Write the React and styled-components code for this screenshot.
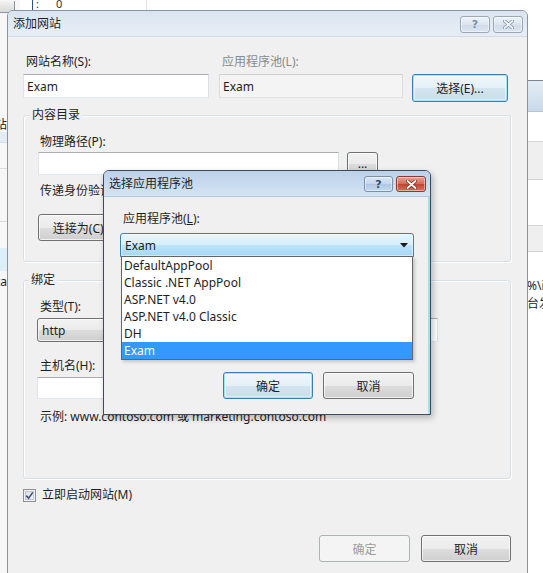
import React from 'react';
import styled, { createGlobalStyle, css } from 'styled-components';

const GlobalStyle = createGlobalStyle`
  html, body {
    margin: 0;
    padding: 0;
  }
  body {
    background: #fff;
    font-family: "Noto Sans", "Noto Sans CJK SC", sans-serif;
    font-size: 12px;
    color: #1e1e1e;
  }
`;

const uiFont = `"Noto Sans", "Noto Sans CJK SC", sans-serif`;

const Desktop = styled.div`
  position: relative;
  width: 543px;
  height: 573px;
  overflow: hidden;
  background: #fff;
  font-family: ${uiFont};
  font-size: 12px;
`;

/* ---------- window behind the dialogs ---------- */

const BackWindow = styled.div`
  position: absolute;
  inset: 0;
  display: grid;
  grid-template-columns: 20px 1fr 16px;
  background: #fff;
`;

const SidePane = styled.div`
  display: flex;
  flex-direction: column;
  overflow: hidden;
  background: ${p => p.$bg || '#fff'};
`;

const PaneRow = styled.div`
  flex: none;
  height: ${p => p.$h}px;
  display: flex;
  align-items: center;
  justify-content: ${p => (p.$end ? 'flex-end' : 'flex-start')};
  padding-right: ${p => p.$pr || 0}px;
  white-space: nowrap;
  background: ${p => p.$bg || 'transparent'};
  border-bottom: ${p => (p.$line ? `1px solid ${p.$line}` : 'none')};
  color: #1e1e1e;
  font-size: 12px;
`;

const CornerButton = styled.div`
  width: 15px;
  height: 12px;
  box-sizing: border-box;
  border-right: 1px solid #8f959c;
  border-bottom: 1px solid #8f959c;
  border-radius: 0 0 3px 0;
  background: linear-gradient(#f2f2f2, #d9d9d9);
`;

const ListHeader = styled.div`
  height: 10px;
  display: flex;
  align-items: flex-start;
  padding-left: 12px;
`;

const HeaderCell = styled.div`
  width: ${p => p.$w}px;
  height: 12px;
  border-left: 1px solid ${p => p.$line};
  font-size: 11px;
  line-height: 8px;
  padding-left: 3px;
  color: #333;
  overflow: hidden;
`;

/* ---------- dialog frame ---------- */

const Window = styled.div`
  position: absolute;
  left: ${p => p.$x}px;
  top: ${p => p.$y}px;
  width: ${p => p.$w}px;
  height: ${p => p.$h}px;
  box-sizing: border-box;
  display: flex;
  flex-direction: column;
  border: 1px solid ${p => (p.$active ? '#3b4b60' : '#87939f')};
  border-radius: 6px 6px 0 0;
  background: #f0f0f0;
  overflow: hidden;
  ${p =>
    p.$active &&
    css`
      box-shadow: inset -2px 0 0 #9fe0ec, 2px 3px 6px rgba(0, 0, 0, 0.25);
    `}
`;

const Caption = styled.div`
  flex: none;
  height: 25px;
  display: flex;
  justify-content: space-between;
  align-items: flex-start;
  padding: 0 4px 0 5px;
  background: ${p =>
    p.$active
      ? 'linear-gradient(#bcd1ea, #c9dbef 55%, #d6e4f3)'
      : 'linear-gradient(#d9e4f0, #e2eaf4 55%, #e6edf5)'};
  border-bottom: 1px solid ${p => (p.$active ? '#b3c6dc' : '#d3dce6')};
`;

const CaptionTitle = styled.span`
  line-height: 25px;
  color: #1e1e1e;
  white-space: nowrap;
`;

const CaptionButtons = styled.div`
  display: flex;
  gap: 3px;
  margin-top: ${p => p.$top}px;
`;

const captionLooks = {
  idle: css`
    border-color: #9aa8b8;
    background: linear-gradient(#eef3f9, #dbe5f0 50%, #cfdbe9 51%, #dce6f1);
    color: #7d8ea3;
  `,
  help: css`
    border-color: #7d90ab;
    background: linear-gradient(#dce8f6, #c3d5ec 50%, #aec6e4 51%, #c6d9ef);
    color: #3a4d66;
  `,
  close: css`
    border-color: #8a3a30;
    background: linear-gradient(#e8a292, #d6685a 50%, #c24433 51%, #d6705c);
    color: #fff;
  `,
};

const CaptionButton = styled.div`
  width: ${p => p.$w}px;
  height: ${p => p.$h}px;
  box-sizing: border-box;
  border: 1px solid;
  border-radius: 3px;
  display: flex;
  align-items: center;
  justify-content: center;
  font-family: "DejaVu Sans", sans-serif;
  font-weight: bold;
  font-size: 11px;
  box-shadow: inset 0 0 0 1px rgba(255, 255, 255, 0.45);
  ${p => captionLooks[p.$look]}
`;

const CloseGlyph = ({ color, stroke }) => (
  <svg width="11" height="9" viewBox="0 0 11 9">
    <path d="M1.5 1 L9.5 8 M9.5 1 L1.5 8" stroke={stroke} strokeWidth="3.4" strokeLinecap="round" />
    <path d="M1.5 1 L9.5 8 M9.5 1 L1.5 8" stroke={color} strokeWidth="1.8" strokeLinecap="round" />
  </svg>
);

/* ---------- controls ---------- */

const Label = styled.div`
  line-height: 16px;
  padding-left: ${p => p.$indent ?? 3}px;
  margin-top: ${p => p.$mt || 0}px;
  color: ${p => (p.$disabled ? '#8a8a8a' : '#1e1e1e')};
  white-space: nowrap;
`;

const TextBox = styled.div`
  box-sizing: border-box;
  width: ${p => (p.$w ? `${p.$w}px` : 'auto')};
  height: ${p => p.$h || 24}px;
  margin-top: ${p => p.$mt || 0}px;
  padding-left: 3px;
  display: flex;
  align-items: center;
  border: 1px solid;
  border-color: #abadb3 #dbdfe6 #e3e9ef #e2e3ea;
  background: #fff;
  color: #1e1e1e;
  ${p =>
    p.$disabled &&
    css`
      border-color: #d0d0d0 #dcdcdc #e2e2e2 #dcdcdc;
      background: #f4f4f4;
    `}
`;

const Button = styled.div`
  box-sizing: border-box;
  width: ${p => p.$w}px;
  height: ${p => p.$h || 27}px;
  display: flex;
  align-items: center;
  justify-content: center;
  border: 1px solid #707070;
  border-radius: 3px;
  background: linear-gradient(#f2f2f2, #ebebeb 50%, #dddddd 51%, #cfcfcf);
  box-shadow: inset 0 0 0 1px rgba(255, 255, 255, 0.7);
  color: #1e1e1e;
  white-space: nowrap;
  ${p =>
    p.$focused &&
    css`
      border-color: #3c7fb1;
      box-shadow: inset 0 0 0 1px #9fe3f7, inset 0 0 0 2px rgba(255, 255, 255, 0.5);
      background: linear-gradient(#eef7fb, #e4f0f7 50%, #d3e5f0 51%, #c8dcea);
    `}
  ${p =>
    p.$disabled &&
    css`
      border-color: #adb2b5;
      background: #f4f4f4;
      box-shadow: none;
      color: #9c9c9c;
    `}
`;

const ComboBox = styled.div`
  position: relative;
  box-sizing: border-box;
  width: ${p => (p.$w ? `${p.$w}px` : 'auto')};
  height: 24px;
  display: flex;
  align-items: center;
  justify-content: space-between;
  padding: 0 5px 0 4px;
  border: 1px solid #707070;
  border-radius: 3px;
  background: linear-gradient(#f2f2f2, #ebebeb 50%, #dddddd 51%, #cfcfcf);
  box-shadow: inset 0 0 0 1px rgba(255, 255, 255, 0.7);
  ${p =>
    p.$open &&
    css`
      border-color: #3c7fb1;
      border-radius: 3px 3px 0 0;
      background: linear-gradient(#e6f5fc, #d6eefb 50%, #bce4fa 51%, #a5d8f4);
      box-shadow: inset 0 0 0 1px rgba(255, 255, 255, 0.5);
    `}
`;

const Arrow = () => (
  <svg width="8" height="5" viewBox="0 0 8 5">
    <path d="M0 0 H8 L4 4.5 Z" fill="#1a1a1a" />
  </svg>
);

const DropList = styled.ul`
  position: absolute;
  left: 0;
  right: 0;
  top: 100%;
  margin: 0;
  padding: 0;
  list-style: none;
  border: 1px solid #646464;
  background: #fff;
  box-shadow: 2px 2px 3px rgba(0, 0, 0, 0.18);
  z-index: 2;
`;

const DropItem = styled.li`
  height: 17px;
  line-height: 17px;
  padding-left: 2px;
  color: ${p => (p.$selected ? '#fff' : '#1e1e1e')};
  background: ${p => (p.$selected ? '#3399ff' : 'transparent')};
  white-space: nowrap;
`;

const CheckRow = styled.div`
  display: flex;
  align-items: center;
  gap: 6px;
  line-height: 16px;
  margin-top: 8px;
`;

const CheckBox = styled.div`
  width: 13px;
  height: 13px;
  box-sizing: border-box;
  border: 1px solid #8e8f8f;
  background: linear-gradient(135deg, #dcdcdc, #fbfbfb);
  box-shadow: inset 0 0 0 1px #f4f4f4, inset 0 0 0 2px #bcc6d4;
  display: flex;
  align-items: center;
  justify-content: center;
`;

/* ---------- layout ---------- */

const Body = styled.div`
  flex: 1;
  display: flex;
  flex-direction: column;
  padding: ${p => p.$pad};
`;

const TopGrid = styled.div`
  display: grid;
  grid-template-columns: 186px 184px 96px;
  column-gap: 10px;
  align-items: start;
`;

const PickButton = styled(Button)`
  margin: 20px 0 0 -1px;
`;

const Field = styled.div`
  display: flex;
  flex-direction: column;
  gap: ${p => p.$gap ?? 4}px;
  width: ${p => (p.$w ? `${p.$w}px` : 'auto')};
`;

const Group = styled.fieldset`
  margin: ${p => p.$mt}px 0 0;
  padding: ${p => p.$pad};
  min-width: 0;
  border: 1px solid #d5dfe5;
  border-radius: 3px;
  box-shadow: inset 1px 1px 0 #fff, 1px 1px 0 #fff;
  display: flex;
  flex-direction: column;
`;

const GroupTitle = styled.legend`
  margin-left: -8px;
  padding: 0 2px;
  line-height: 16px;
  background: #f0f0f0;
`;

const Row = styled.div`
  display: flex;
  align-items: ${p => p.$align || 'center'};
  gap: ${p => p.$gap ?? 8}px;
  margin-top: ${p => p.$mt || 0}px;
`;

const ButtonBar = styled.div`
  display: flex;
  justify-content: flex-end;
  gap: ${p => p.$gap}px;
  margin-top: ${p => p.$mt}px;
`;

const pools = ['DefaultAppPool', 'Classic .NET AppPool', 'ASP.NET v4.0', 'ASP.NET v4.0 Classic', 'DH', 'Exam'];

function TitleButtons({ active, top, helpW, h }) {
  return (
    <CaptionButtons $top={top}>
      <CaptionButton $w={helpW} $h={h} $look={active ? 'help' : 'idle'}>?</CaptionButton>
      <CaptionButton $w={30} $h={h} $look={active ? 'close' : 'idle'}>
        <CloseGlyph color={active ? '#fff' : '#eef3f8'} stroke={active ? '#7a2a20' : '#7f90a5'} />
      </CaptionButton>
    </CaptionButtons>
  );
}

function Background() {
  return (
    <BackWindow>
      <SidePane $bg="#f7f7f7">
        <PaneRow $h={13}>
          <CornerButton />
        </PaneRow>
        <PaneRow $h={102} />
        <PaneRow $h={17} $end $pr={13}>网站</PaneRow>
        <PaneRow $h={10} $bg="#e4ecf4" $line="#d6dde6" />
        <PaneRow $h={25} $line="#dcdcdc" />
        <PaneRow $h={52} $line="#dcdcdc" />
        <PaneRow $h={26} />
        <PaneRow $h={23} $bg="#dceef6" />
        <PaneRow $h={20} $end $pr={13}>data</PaneRow>
      </SidePane>
      <div>
        <ListHeader>
          <HeaderCell $w={110} $line="#2c4f86">: &nbsp;&nbsp;&nbsp;&nbsp; 0</HeaderCell>
          <HeaderCell $w={200} $line="#e3e3e3" />
        </ListHeader>
      </div>
      <SidePane>
        <PaneRow $h={80} $line="#7c8796" />
        <PaneRow $h={30} $bg="linear-gradient(#e4edf6, #c9d9ea)" $line="#b7c4d2" />
        <PaneRow $h={29} $line="#d4d4d4" />
        <PaneRow $h={37} $bg="#efefef" $line="#d4d4d4" />
        <PaneRow $h={45} $line="#d4d4d4" />
        <PaneRow $h={25} $bg="#efefef" $line="#d4d4d4" />
        <PaneRow $h={24} />
        <PaneRow $h={18}>%\i</PaneRow>
        <PaneRow $h={18}>台发</PaneRow>
      </SidePane>
    </BackWindow>
  );
}

export default function App() {
  return (
    <Desktop>
      <GlobalStyle />
      <Background />

      <Window $x={7} $y={10} $w={521} $h={580}>
        <Caption>
          <CaptionTitle>添加网站</CaptionTitle>
          <TitleButtons top={5} helpW={30} h={17} />
        </Caption>
        <Body $pad="17px 16px 0 15px">
          <TopGrid>
            <Field>
              <Label>网站名称(S):</Label>
              <TextBox>Exam</TextBox>
            </Field>
            <Field>
              <Label $disabled>应用程序池(L):</Label>
              <TextBox $disabled>Exam</TextBox>
            </Field>
            <PickButton $w={96} $h={28} $focused>选择(E)...</PickButton>
          </TopGrid>

          <Group $mt={5} $pad="11px 14px 20px">
            <GroupTitle>内容目录</GroupTitle>
            <Label $indent={2}>物理路径(P):</Label>
            <Row $mt={2} $gap={8}>
              <TextBox $w={301} $h={23} />
              <Button $w={31} $h={23}>...</Button>
            </Row>
            <Label $indent={2} $mt={8}>传递身份验证:</Label>
            <Row $mt={15} $gap={10}>
              <Button $w={90}>连接为(C)...</Button>
              <Button $w={100}>测试设置(G)...</Button>
            </Row>
          </Group>

          <Group $mt={10} $pad="11px 14px 53px 13px">
            <GroupTitle>绑定</GroupTitle>
            <Row $align="flex-start" $gap={10}>
              <Field $gap={3}>
                <Label>类型(T):</Label>
                <ComboBox $w={120}>
                  http
                  <Arrow />
                </ComboBox>
              </Field>
              <Field $gap={3}>
                <Label>IP 地址(I):</Label>
                <ComboBox $w={191}>
                  全部未分配
                  <Arrow />
                </ComboBox>
              </Field>
              <Field $gap={3} $w={70}>
                <Label>端口(O):</Label>
                <TextBox>80</TextBox>
              </Field>
            </Row>
            <Label $mt={16}>主机名(H):</Label>
            <TextBox $w={360} $h={22} $mt={3} />
            <Label $mt={10}>示例: www.contoso.com 或 marketing.contoso.com</Label>
          </Group>

          <CheckRow>
            <CheckBox>
              <svg width="9" height="9" viewBox="0 0 9 9">
                <path d="M1.2 4.6 L3.6 7.2 L7.8 1.4" fill="none" stroke="#3d4f7c" strokeWidth="1.6" />
              </svg>
            </CheckBox>
            <span>立即启动网站(M)</span>
          </CheckRow>

          <ButtonBar $gap={11} $mt={32}>
            <Button $w={91} $disabled>确定</Button>
            <Button $w={90}>取消</Button>
          </ButtonBar>
        </Body>
      </Window>

      <Window $x={103} $y={170} $w={328} $h={245} $active>
        <Caption $active>
          <CaptionTitle>选择应用程序池</CaptionTitle>
          <TitleButtons active top={5} helpW={29} h={16} />
        </Caption>
        <Body $pad="14px 16px 0 16px">
          <Field $gap={6}>
            <Label>应用程序池(<u>L</u>):</Label>
            <ComboBox $open>
              Exam
              <Arrow />
              <DropList>
                {pools.map(name => (
                  <DropItem key={name} $selected={name === 'Exam'}>
                    {name}
                  </DropItem>
                ))}
              </DropList>
            </ComboBox>
          </Field>
          <ButtonBar $gap={10} $mt={115}>
            <Button $w={90} $focused>确定</Button>
            <Button $w={91}>取消</Button>
          </ButtonBar>
        </Body>
      </Window>
    </Desktop>
  );
}
